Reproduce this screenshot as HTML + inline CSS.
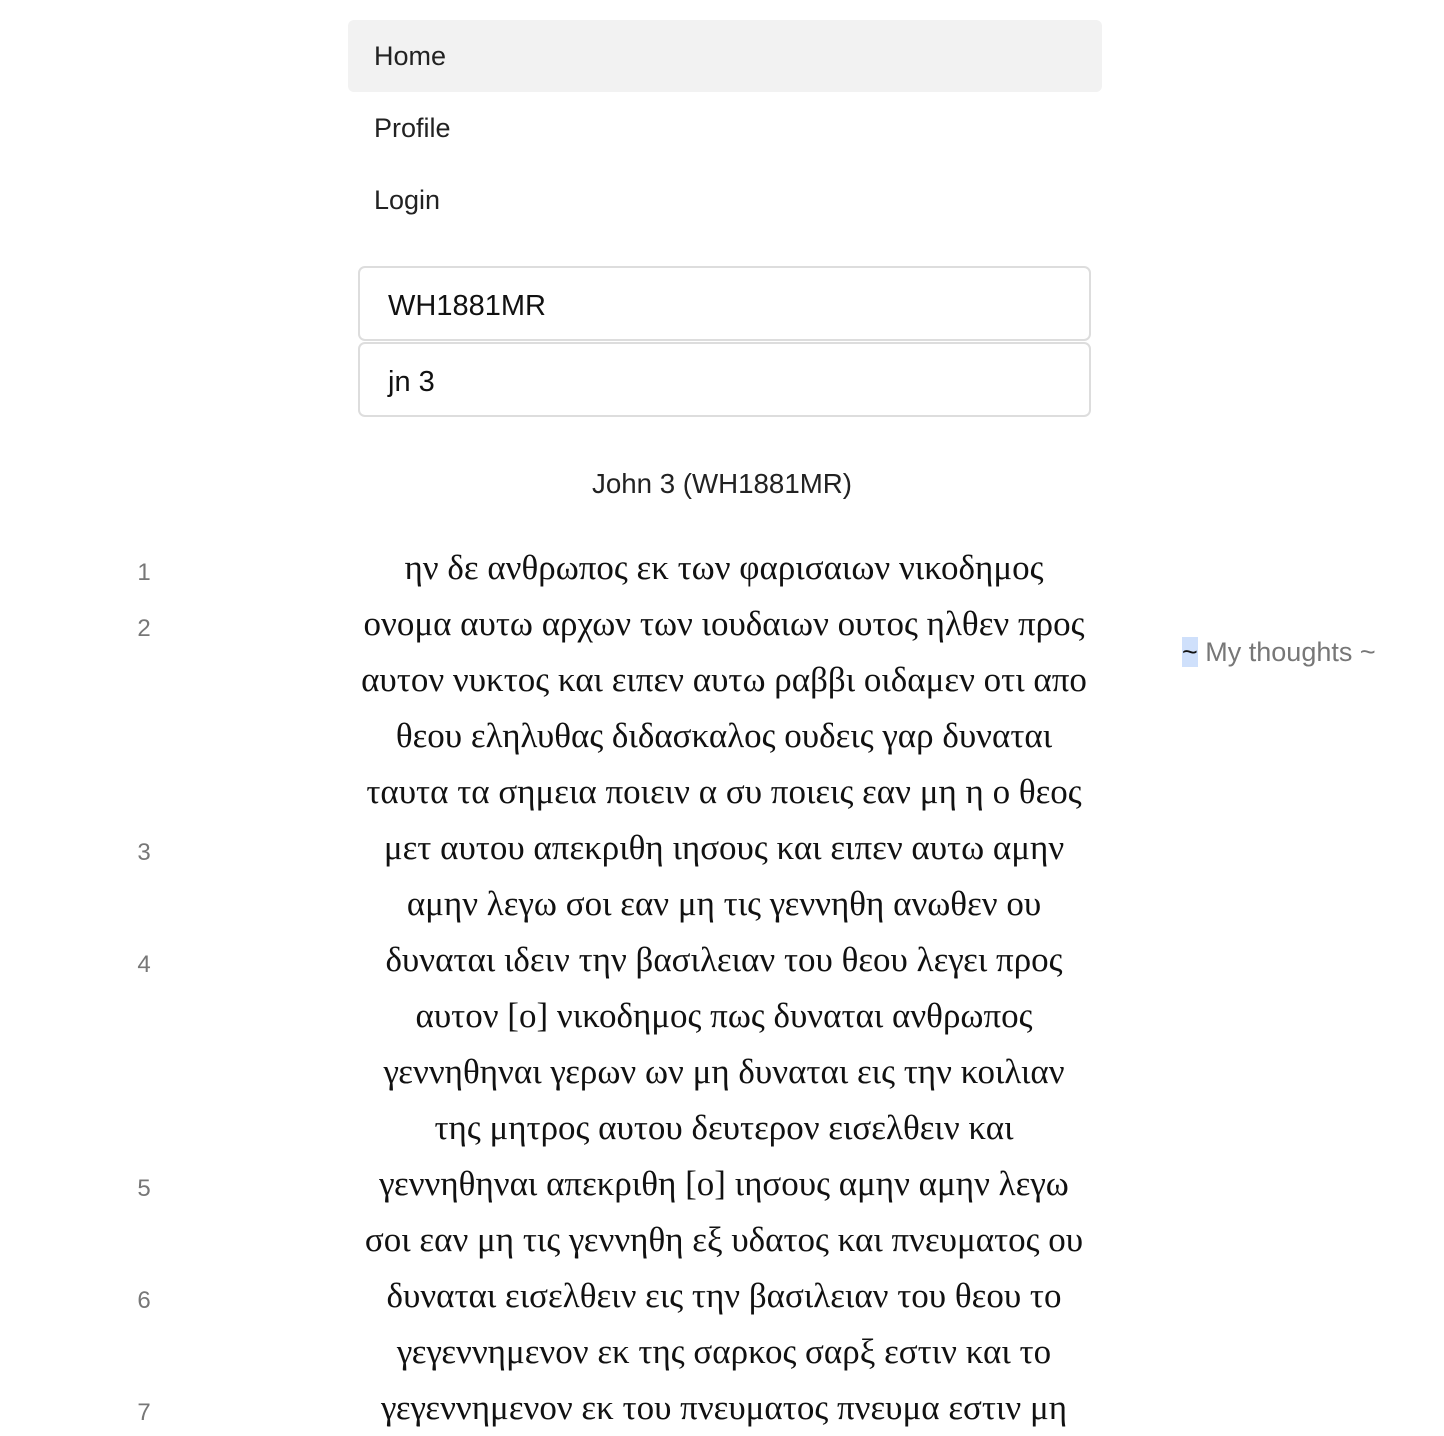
<!DOCTYPE html>
<html><head><meta charset="utf-8"><style>
body{margin:0;background:#fff;width:1444px;height:1430px;overflow:hidden;position:relative;font-family:"Liberation Sans",sans-serif;color:#222}
.nav{position:absolute;left:348px;width:754px;height:72px;line-height:72px;font-size:27px;padding-left:26px;box-sizing:border-box;border-radius:6px}
.inp{position:absolute;left:358px;width:733px;height:75px;border:2px solid #ddd;border-radius:7px;box-sizing:border-box;font-size:29px;line-height:77px;padding-left:28px;color:#111}
.t{position:absolute;left:0;width:1444px;text-align:center;font-size:27.7px}
.g{position:absolute;left:224px;width:1000px;text-align:center;font-family:"Liberation Serif",serif;font-size:35px;height:56px;line-height:56px;color:#111;white-space:nowrap}
.n{position:absolute;left:130px;width:28px;text-align:center;font-size:24px;color:#777;line-height:30px}
</style></head><body>
<div class="nav" style="top:20px;background:#f2f2f2">Home</div>
<div class="nav" style="top:92px">Profile</div>
<div class="nav" style="top:164px">Login</div>
<div class="inp" style="top:266px">WH1881MR</div>
<div class="inp" style="top:342px">jn 3</div>
<div class="t" style="top:467px;line-height:34px">John 3 (WH1881MR)</div>
<div class="g" style="top:540px">ην δε ανθρωπος εκ των φαρισαιων νικοδημος</div>
<div class="g" style="top:596px">ονομα αυτω αρχων των ιουδαιων ουτος ηλθεν προς</div>
<div class="g" style="top:652px">αυτον νυκτος και ειπεν αυτω ραββι οιδαμεν οτι απο</div>
<div class="g" style="top:708px">θεου εληλυθας διδασκαλος ουδεις γαρ δυναται</div>
<div class="g" style="top:764px">ταυτα τα σημεια ποιειν α συ ποιεις εαν μη η ο θεος</div>
<div class="g" style="top:820px">μετ αυτου απεκριθη ιησους και ειπεν αυτω αμην</div>
<div class="g" style="top:876px">αμην λεγω σοι εαν μη τις γεννηθη ανωθεν ου</div>
<div class="g" style="top:932px">δυναται ιδειν την βασιλειαν του θεου λεγει προς</div>
<div class="g" style="top:988px">αυτον [ο] νικοδημος πως δυναται ανθρωπος</div>
<div class="g" style="top:1044px">γεννηθηναι γερων ων μη δυναται εις την κοιλιαν</div>
<div class="g" style="top:1100px">της μητρος αυτου δευτερον εισελθειν και</div>
<div class="g" style="top:1156px">γεννηθηναι απεκριθη [ο] ιησους αμην αμην λεγω</div>
<div class="g" style="top:1212px">σοι εαν μη τις γεννηθη εξ υδατος και πνευματος ου</div>
<div class="g" style="top:1268px">δυναται εισελθειν εις την βασιλειαν του θεου το</div>
<div class="g" style="top:1324px">γεγεννημενον εκ της σαρκος σαρξ εστιν και το</div>
<div class="g" style="top:1380px">γεγεννημενον εκ του πνευματος πνευμα εστιν μη</div>
<div class="n" style="top:558px">1</div>
<div class="n" style="top:614px">2</div>
<div class="n" style="top:838px">3</div>
<div class="n" style="top:950px">4</div>
<div class="n" style="top:1174px">5</div>
<div class="n" style="top:1286px">6</div>
<div class="n" style="top:1398px">7</div>
<div style="position:absolute;left:1182px;top:636px;font-size:27px;line-height:32px;color:#777;white-space:nowrap"><span style="background:#cfe0fb;color:#111">~</span> My thoughts ~</div>
</body></html>
